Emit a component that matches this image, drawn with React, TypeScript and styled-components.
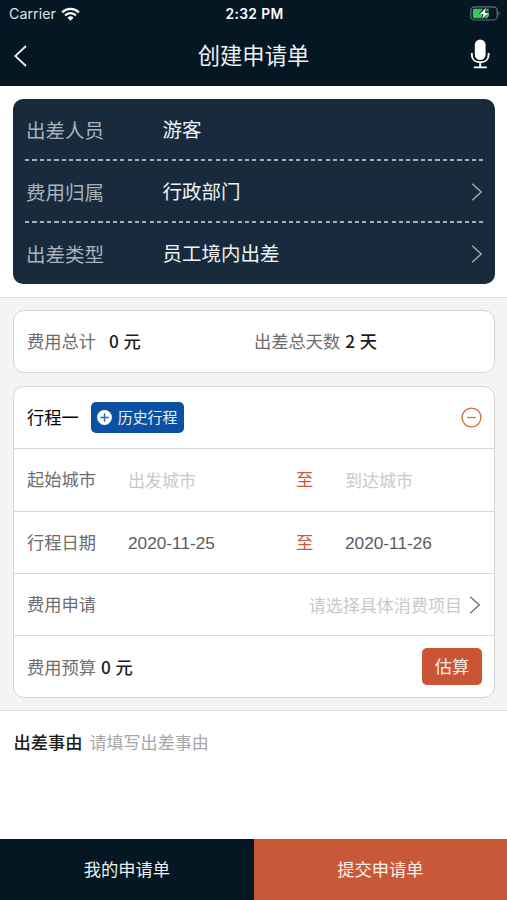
import React from "react";
import styled, { createGlobalStyle } from "styled-components";

const GlobalStyle = createGlobalStyle`
  * { box-sizing: border-box; }
  body { margin: 0; background: #fff; }
  button { border: 0; padding: 0; margin: 0; font: inherit; background: none; }
`;

const cjk = `"Noto Sans CJK SC", sans-serif`;

const Page = styled.div`
  width: 507px;
  height: 900px;
  display: flex;
  flex-direction: column;
  overflow: hidden;
  background: #fff;
  font-family: "Liberation Sans", ${cjk};
  font-size: 17.25px;
  color: #1c1c1c;
  white-space: nowrap;
`;

const Header = styled.header`
  flex: none;
  height: 86px;
  background: #041723;
  color: #fff;
`;

const StatusBar = styled.div`
  height: 27px;
  display: grid;
  grid-template-columns: 1fr auto 1fr;
  align-items: center;
  padding: 0 7px 0 9px;
  font-family: Inter, sans-serif;
  font-size: 14.2px;
`;

const Carrier = styled.div`
  display: flex;
  align-items: center;
  gap: 5px;
  color: #dfe4e8;
  letter-spacing: 0.05px;
`;

const Clock = styled.div`
  font-size: 13.8px;
  font-weight: 600;
  letter-spacing: 0.35px;
`;

const BatterySlot = styled.div`
  display: flex;
  justify-content: flex-end;
`;

const NavBar = styled.div`
  height: 57px;
  display: grid;
  grid-template-columns: 60px 1fr 60px;
  align-items: center;
`;

const NavButton = styled.button<{ $end?: boolean }>`
  display: flex;
  color: #fff;
  justify-content: ${(p) => (p.$end ? "flex-end" : "flex-start")};
  padding: ${(p) => (p.$end ? "0 17px 3px 0" : "0 0 0 13px")};
`;

const Title = styled.h1`
  margin: 0;
  padding-bottom: 3px;
  text-align: center;
  font-family: ${cjk};
  font-weight: 400;
  font-size: 22.3px;
  line-height: 30px;
  color: #eef1f3;
`;

const TravelerSection = styled.section`
  flex: none;
  height: 211px;
  padding: 13px 12px 0 13px;
`;

const TravelerCard = styled.div`
  height: 185px;
  padding: 0 12px;
  border-radius: 10px;
  background: #172b3d;
`;

const TravelerRow = styled.div<{ $divided?: boolean }>`
  height: 62px;
  display: grid;
  grid-template-columns: 136.5px 1fr 12px;
  align-items: center;
  padding-left: 1px;
  font-family: ${cjk};
  font-size: 19.5px;
  line-height: 28px;
  background: ${(p) =>
    p.$divided
      ? "repeating-linear-gradient(90deg, #a3b1bc 0 4.2px, transparent 4.2px 7.33px) 0 100% / 100% 2px no-repeat"
      : "none"};
`;

const TravelerLabel = styled.span`
  color: #a9b2b9;
  padding-bottom: 1px;
`;

const TravelerValue = styled.span`
  color: #eef2f5;
  padding-bottom: 3px;
`;

const TravelerLink = styled.span`
  display: flex;
`;

const TripSection = styled.main`
  flex: none;
  height: 414px;
  padding: 12px 12px 0 13px;
  border-top: 1px solid #dfdfdf;
  border-bottom: 1.5px solid #dedede;
  background: #f4f4f4;
`;

const Card = styled.div`
  border: 1.5px solid #d6d6d6;
  border-radius: 11px;
  background: #fff;
`;

const TotalsCard = styled(Card)`
  height: 63px;
  display: grid;
  grid-template-columns: 227px 1fr;
  align-items: center;
  padding-left: 13px;
  margin-bottom: 13px;
`;

const Pair = styled.div<{ $gap: number }>`
  display: flex;
  align-items: center;
  gap: ${(p) => p.$gap}px;
`;

const TripCard = styled(Card)`
  height: 312px;
`;

const TripRow = styled.div`
  height: 62.3px;
  display: flex;
  align-items: center;
  padding: 0 12px 0 13px;
  border-bottom: 1.5px solid #d9d9d9;
  &:last-child { border-bottom: 0; }
`;

const Label = styled.span`
  color: #6d6d6d;
  line-height: 24px;
  padding-top: 1px;
`;

const Strong = styled.span`
  font-family: ${cjk};
  font-weight: 500;
  color: #1c1c1c;
  line-height: 24px;
  padding-bottom: 1px;
  word-spacing: 0.8px;
`;

const TripName = styled(Strong)`
  font-weight: 400;
  color: #000;
`;

const FieldLabel = styled(Label)`
  width: 101px;
`;

const Field = styled.span<{ $empty?: boolean; $width?: number }>`
  width: ${(p) => (p.$width ? `${p.$width}px` : "auto")};
  font-size: ${(p) => (p.$empty ? 17.05 : 17.25)}px;
  color: ${(p) => (p.$empty ? "#c9c9c9" : "#5c5c5c")};
  line-height: 24px;
  padding-top: ${(p) => (p.$empty ? 4 : 1)}px;
`;

const To = styled.span`
  width: 49px;
  color: #cb5a3a;
  line-height: 24px;
  padding-top: 1px;
`;

const Spacer = styled.div`
  flex: 1;
`;

const HistoryButton = styled.button`
  width: 93px;
  height: 31px;
  margin-left: 12.5px;
  display: flex;
  align-items: center;
  gap: 5.5px;
  padding: 0 0 1px 6px;
  border-radius: 5px;
  background: #0b50a2;
  color: #e9f0f8;
  font-family: ${cjk};
  font-size: 14.9px;
  line-height: 22px;
`;

const RemoveButton = styled.button`
  display: flex;
`;

const EstimateButton = styled.button`
  width: 60px;
  height: 37px;
  padding-bottom: 1px;
  margin-bottom: 1px;
  border-radius: 5px;
  background: #ca5536;
  color: #fbeee9;
  font-family: ${cjk};
  line-height: 24px;
`;

const ChevronSlot = styled.span`
  display: flex;
  margin-left: 7px;
  margin-right: 1px;
`;

const ReasonSection = styled.section`
  flex: 1;
  display: flex;
  align-items: flex-start;
  gap: 7px;
  padding: 19px 13.5px;
`;

const Placeholder = styled.span`
  color: #a6a6a6;
  font-size: 17.05px;
  line-height: 24px;
  padding-top: 2px;
`;

const Footer = styled.footer`
  flex: none;
  height: 61px;
  display: grid;
  grid-template-columns: 254px 253px;
`;

const FooterButton = styled.button<{ $primary?: boolean }>`
  padding-bottom: 2px;
  background: ${(p) => (p.$primary ? "#c95838" : "#041723")};
  color: ${(p) => (p.$primary ? "#fdf0eb" : "#eef1f3")};
  font-family: ${cjk};
  font-size: 17.25px;
  line-height: 24px;
`;

const WifiIcon = () => (
  <svg width="19" height="14" viewBox="0 0 19 14" fill="none">
    <path d="M1.2 5.3a12 12 0 0 1 16.6 0" stroke="#fff" strokeWidth="2.3" />
    <path d="M4.1 8.4a7.7 7.7 0 0 1 10.8 0" stroke="#fff" strokeWidth="2.2" />
    <path d="M9.5 13.8 6.5 10.8a4.3 4.3 0 0 1 6 0Z" fill="#fff" />
  </svg>
);

const BatteryIcon = () => (
  <svg width="30" height="15" viewBox="0 0 30 15">
    <rect x="0.8" y="0.8" width="26.4" height="13.2" rx="3.8" fill="none" stroke="#65727a" strokeWidth="1.2" />
    <path d="M4.5 2.7H13L9 8h3.6l-1.2 4.2H4.5a1.7 1.7 0 0 1-1.7-1.7V4.4a1.7 1.7 0 0 1 1.7-1.7Z" fill="#35c759" />
    <path d="M16.6 2.7h2.1v2.5h-2.5ZM18.2 6.5h.8v3.6l-1.8 2.1h-3Z" fill="#35c759" />
    <path d="M16 1.8 9.8 8h3.6l-1.2 5.1 6.2-6.4h-3.5Z" fill="#fff" />
    <path d="M28.5 5.3c1.5.7 1.5 3.5 0 4.2Z" fill="#65727a" />
  </svg>
);

const BackIcon = () => (
  <svg width="15" height="24" viewBox="0 0 15 24" fill="none">
    <path d="M13 2 2.3 12 13 22" stroke="#eef1f3" strokeWidth="1.8" />
  </svg>
);

const MicIcon = () => (
  <svg width="20" height="30" viewBox="0 0 20 30" fill="none">
    <rect x="4.8" y="0.5" width="10.8" height="20.5" rx="5.4" fill="#fff" />
    <path d="M1.8 14v1.7c0 5 3.6 7.6 8.4 7.6s8.4-2.6 8.4-7.6V14M10.2 23.3v5M3.8 28.4h13" stroke="#fff" strokeWidth="1.9" />
  </svg>
);

const Chevron = ({ color }: { color: string }) => (
  <svg width="12" height="20" viewBox="0 0 12 20" fill="none">
    <path d="M1.2 1.8 10.2 10 1.2 18.2" stroke={color} strokeWidth="1.5" />
  </svg>
);

const PlusIcon = () => (
  <svg width="15" height="15" viewBox="0 0 15 15">
    <circle cx="7.5" cy="7.5" r="7.4" fill="#fff" />
    <path d="M7.5 3.3v8.4M3.3 7.5h8.4" stroke="#2c68b0" strokeWidth="1.4" />
  </svg>
);

const MinusIcon = () => (
  <svg width="21" height="21" viewBox="0 0 21 21" fill="none" stroke="#d56c50">
    <circle cx="10.5" cy="10.5" r="9.4" strokeWidth="1.4" />
    <path d="M6.2 10.5h8.6" strokeWidth="1.3" />
  </svg>
);

const travelerRows = [
  { label: "出差人员", value: "游客", link: false },
  { label: "费用归属", value: "行政部门", link: true },
  { label: "出差类型", value: "员工境内出差", link: true },
];

export default function App() {
  return (
    <Page>
      <GlobalStyle />
      <Header>
        <StatusBar>
          <Carrier>
            Carrier
            <WifiIcon />
          </Carrier>
          <Clock>2:32 PM</Clock>
          <BatterySlot>
            <BatteryIcon />
          </BatterySlot>
        </StatusBar>
        <NavBar>
          <NavButton aria-label="返回">
            <BackIcon />
          </NavButton>
          <Title>创建申请单</Title>
          <NavButton $end aria-label="语音">
            <MicIcon />
          </NavButton>
        </NavBar>
      </Header>

      <TravelerSection>
        <TravelerCard>
          {travelerRows.map((row, i) => (
            <TravelerRow key={row.label} $divided={i < travelerRows.length - 1}>
              <TravelerLabel>{row.label}</TravelerLabel>
              <TravelerValue>{row.value}</TravelerValue>
              {row.link && (
                <TravelerLink>
                  <Chevron color="#9ba8b2" />
                </TravelerLink>
              )}
            </TravelerRow>
          ))}
        </TravelerCard>
      </TravelerSection>

      <TripSection>
        <TotalsCard>
          <Pair $gap={13}>
            <Label>费用总计</Label>
            <Strong>0 元</Strong>
          </Pair>
          <Pair $gap={5}>
            <Label>出差总天数</Label>
            <Strong>2 天</Strong>
          </Pair>
        </TotalsCard>

        <TripCard>
          <TripRow>
            <TripName>行程一</TripName>
            <HistoryButton>
              <PlusIcon />
              历史行程
            </HistoryButton>
            <Spacer />
            <RemoveButton aria-label="删除行程">
              <MinusIcon />
            </RemoveButton>
          </TripRow>
          <TripRow>
            <FieldLabel>起始城市</FieldLabel>
            <Field $empty $width={168}>出发城市</Field>
            <To>至</To>
            <Field $empty>到达城市</Field>
          </TripRow>
          <TripRow>
            <FieldLabel>行程日期</FieldLabel>
            <Field $width={168}>2020-11-25</Field>
            <To>至</To>
            <Field>2020-11-26</Field>
          </TripRow>
          <TripRow>
            <FieldLabel>费用申请</FieldLabel>
            <Spacer />
            <Field $empty>请选择具体消费项目</Field>
            <ChevronSlot>
              <Chevron color="#777" />
            </ChevronSlot>
          </TripRow>
          <TripRow>
            <Pair $gap={5}>
              <Label>费用预算</Label>
              <Strong>0 元</Strong>
            </Pair>
            <Spacer />
            <EstimateButton>估算</EstimateButton>
          </TripRow>
        </TripCard>
      </TripSection>

      <ReasonSection>
        <Strong>出差事由</Strong>
        <Placeholder>请填写出差事由</Placeholder>
      </ReasonSection>

      <Footer>
        <FooterButton>我的申请单</FooterButton>
        <FooterButton $primary>提交申请单</FooterButton>
      </Footer>
    </Page>
  );
}
